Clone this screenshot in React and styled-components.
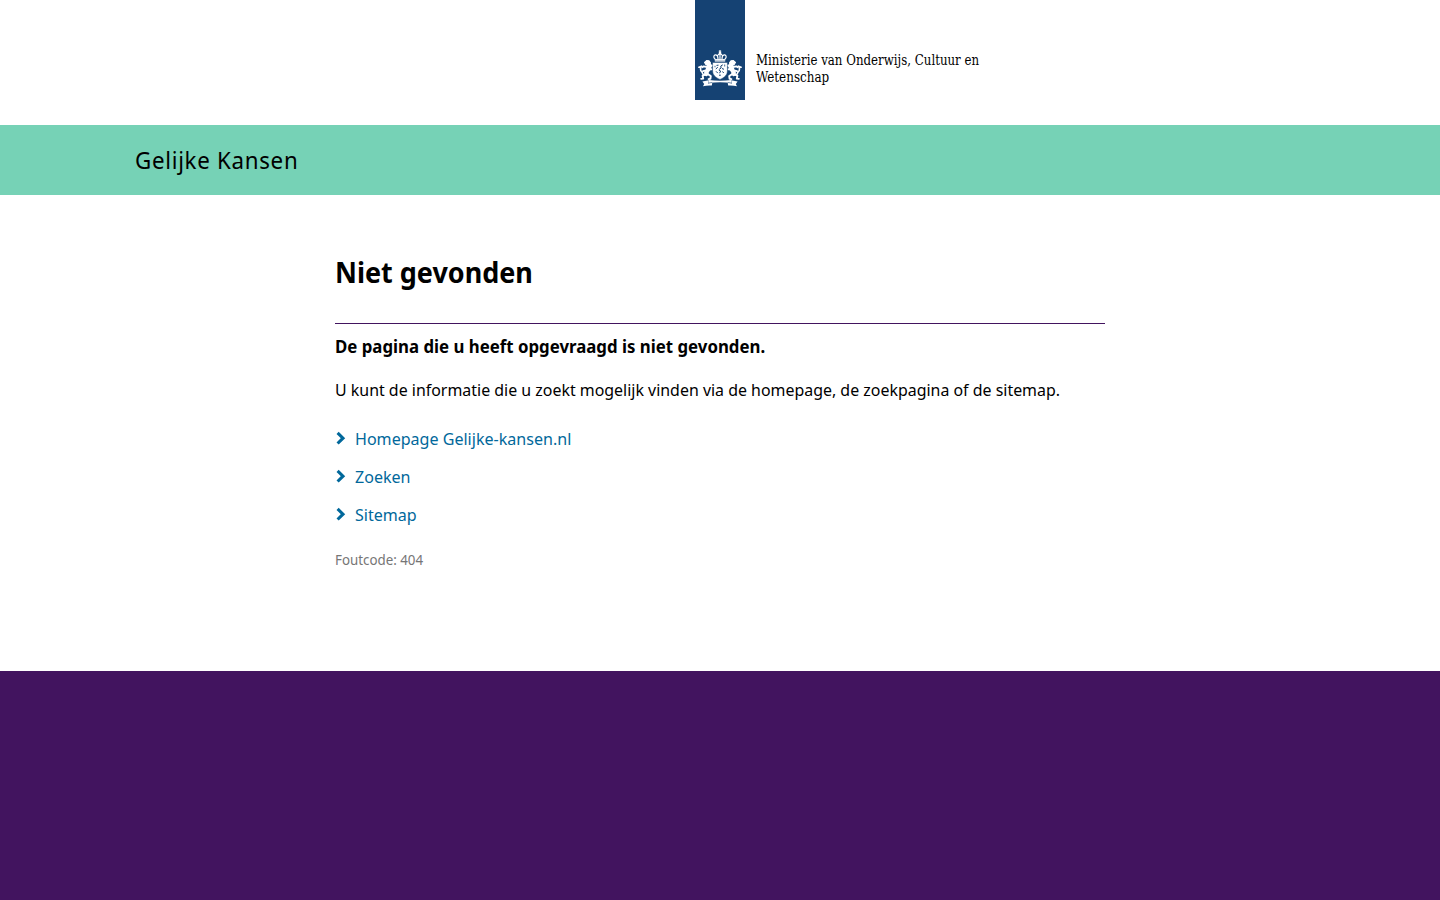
import React from "react";
import styled, { createGlobalStyle } from "styled-components";

const GlobalStyle = createGlobalStyle`
  * { box-sizing: border-box; }
  html, body { margin: 0; padding: 0; background: #fff; }
  body { font-family: "Noto Sans", "Open Sans", sans-serif; color: #000; }
`;

const Page = styled.div`
  height: 900px;
  display: flex;
  flex-direction: column;
  overflow: hidden;
`;

const Header = styled.header`
  height: 125px;
  flex: none;
  display: flex;
  padding-left: 695px;
`;

const Ribbon = styled.div`
  width: 50px;
  height: 100px;
  background: #154273;
  padding: 50px 3px 0;
`;

const Arms = styled.svg`
  display: block;
  width: 44px;
  height: 37px;
`;

const Ministry = styled.div`
  padding: 52px 0 0 11px;
  font: 14px/17px "DejaVu Serif Condensed", "DejaVu Serif", serif;
  font-stretch: condensed;
`;

const Line = styled.span`
  display: block;
  width: max-content;
  white-space: nowrap;
  font-size: ${(p) => p.$size}px;
  font-weight: ${(p) => p.$weight || 400};
  letter-spacing: ${(p) => p.$track || 0}px;
  transform: scaleX(${(p) => p.$squeeze || 1});
  transform-origin: left;
`;

const TitleBar = styled.div`
  height: 70px;
  flex: none;
  display: flex;
  align-items: center;
  padding: 0 0 1px 135px;
  background: #76d2b6;
  line-height: 36px;
`;

const Main = styled.main`
  width: 770px;
  height: 476px;
  flex: none;
  margin: 0 auto;
  padding-top: 55px;
`;

const Heading = styled.h1`
  margin: 0;
  height: 74px;
  border-bottom: 1px solid #42145f;
  line-height: 44px;
`;

const Intro = styled.p`
  margin: 0;
  padding-top: 9px;
  line-height: 27px;
`;

const Text = styled.p`
  margin: 16px 0 0;
  line-height: 27px;
`;

const Links = styled.ul`
  list-style: none;
  margin: 22px 0 0;
  padding: 0;
  display: flex;
  flex-direction: column;
  gap: 11px;
`;

const Link = styled.a`
  display: flex;
  color: #01689b;
  line-height: 27px;
  text-decoration: none;
`;

const Chevron = styled.svg`
  width: 20px;
  height: 27px;
  flex: none;
`;

const ErrorCode = styled.p`
  margin: 21px 0 0;
  line-height: 22px;
  color: #767676;
`;

const Footer = styled.footer`
  flex: 1;
  background: #42145f;
`;

function Lion() {
  return (
    <g fill="none" stroke="#fff" strokeLinecap="round" strokeLinejoin="round">
      <path d="M6.6 12.4l2-1.8 2.4.2 1.4 2-1.6 1.6-2.8.4z" fill="#fff" strokeWidth="1.2" />
      <path d="M10.6 14.2c1.4 1.8.4 4-1 5.8-1 1.4-1.6 2.6-1.2 3.8" strokeWidth="4.6" />
      <path d="M9 17l-3.4-.6-1.4.8M10.6 19.6l3-.4M10.6 17.4l3.6-2M8 23.8l-3.4 1.8.6 3-2 .3M9 23.6l3.8 2.4-.4 2.8-1.8.3M7 20.6l-2 .6" strokeWidth="1.9" />
      <path d="M6.4 25C3.8 24.4 5 22.6 3.4 21.4 1.8 20.2 3.2 18.4 2.2 16.8L.9 17.2M2.2 16.8l1.4-.6" strokeWidth="1.6" />
    </g>
  );
}

function CoatOfArms() {
  return (
    <Arms viewBox="0 0 44 37" aria-hidden="true">
      <g fill="#fff">
        <circle cx="22" cy="2.9" r="1.3" />
        <path d="M21.5 0h1v2h-1zM20.7.7h2.6v.8h-2.6z" />
        <path d="M16.8 9h10.4v2.6H16.8z" />
      </g>
      <g fill="none" stroke="#fff" strokeWidth="1.2">
        <path d="M17.3 9.4C14.6 7.2 16 4.5 18 4.9c1.7.3 2 2.3 2 4.1M26.7 9.4C29.4 7.2 28 4.5 26 4.9c-1.7.3-2 2.3-2 4.1M22 3.2v6M20 5.6c0-2.2 4-2.2 4 0" />
      </g>
      <path d="M17.5 10.3h9" stroke="#154273" strokeWidth=".6" strokeDasharray="1 1" />
      <Lion />
      <g transform="translate(44 0) scale(-1 1)"><Lion /></g>
      <path d="M14.6 12.4h14.8v8.3c0 4.2-3 7-7.4 8.7-4.4-1.7-7.4-4.5-7.4-8.7z" fill="#fff" stroke="#154273" strokeWidth=".5" />
      <g fill="none" stroke="#154273" strokeWidth="1">
        <path d="M24.8 14.8l-2 1.2.3 2-2 1.4M20.5 15.2l-2 .2M19.8 17.2l-2 1.8M20.8 20l1.8 1-1 2.2M24 18.5l2 .8M24.5 21.5l1.2 1.5M18 21.3l1.8 1.8M21 25.2h1.8" />
        <path d="M26.7 14.5v2M17 15.8v1.5" strokeWidth=".8" />
      </g>
      <g fill="#fff">
        <path d="M10.8 30c7.2.9 15.2.9 22.4 0l.5 3.1c-7.5-1.1-15.9-1.1-23.4 0z" />
        <path d="M4.4 31.4l6.4-1.2-.8 3 4.3-.4-.5 2.8c-3-.3-5.8 0-8.8.6l1.2-2.1z" />
        <path d="M39.6 31.4l-6.4-1.2.8 3-4.3-.4.5 2.8c3-.3 5.8 0 8.8.6l-1.2-2.1z" />
      </g>
      <path d="M10 33.2l4.2-.7M34 33.2l-4.2-.7" fill="none" stroke="#154273" strokeWidth=".5" />
    </Arms>
  );
}

const links = ["Homepage Gelijke-kansen.nl", "Zoeken", "Sitemap"];

export default function App() {
  return (
    <>
      <GlobalStyle />
      <Page>
        <Header>
          <Ribbon><CoatOfArms /></Ribbon>
          <Ministry>
            <Line $size={14} $squeeze={0.937}>Ministerie van Onderwijs, Cultuur en</Line>
            <Line $size={14} $squeeze={0.95}>Wetenschap</Line>
          </Ministry>
        </Header>
        <TitleBar>
          <Line $size={24} $squeeze={0.93} $track={0.75}>Gelijke Kansen</Line>
        </TitleBar>
        <Main>
          <Heading><Line $size={29} $weight={700} $squeeze={0.93}>Niet gevonden</Line></Heading>
          <Intro><Line $size={18} $weight={700} $squeeze={0.934}>De pagina die u heeft opgevraagd is niet gevonden.</Line></Intro>
          <Text><Line $size={17} $squeeze={0.937}>U kunt de informatie die u zoekt mogelijk vinden via de homepage, de zoekpagina of de sitemap.</Line></Text>
          <Links>
            {links.map((label) => (
              <li key={label}>
                <Link>
                  <Chevron viewBox="0 0 20 27" aria-hidden="true">
                    <path d="M2.6 7.9l5.4 5.3-5.4 5.3" fill="none" stroke="#01689b" strokeWidth="3.1" />
                  </Chevron>
                  <Line $size={17} $squeeze={0.945}>{label}</Line>
                </Link>
              </li>
            ))}
          </Links>
          <ErrorCode><Line $size={14} $squeeze={0.952}>Foutcode: 404</Line></ErrorCode>
        </Main>
        <Footer />
      </Page>
    </>
  );
}
